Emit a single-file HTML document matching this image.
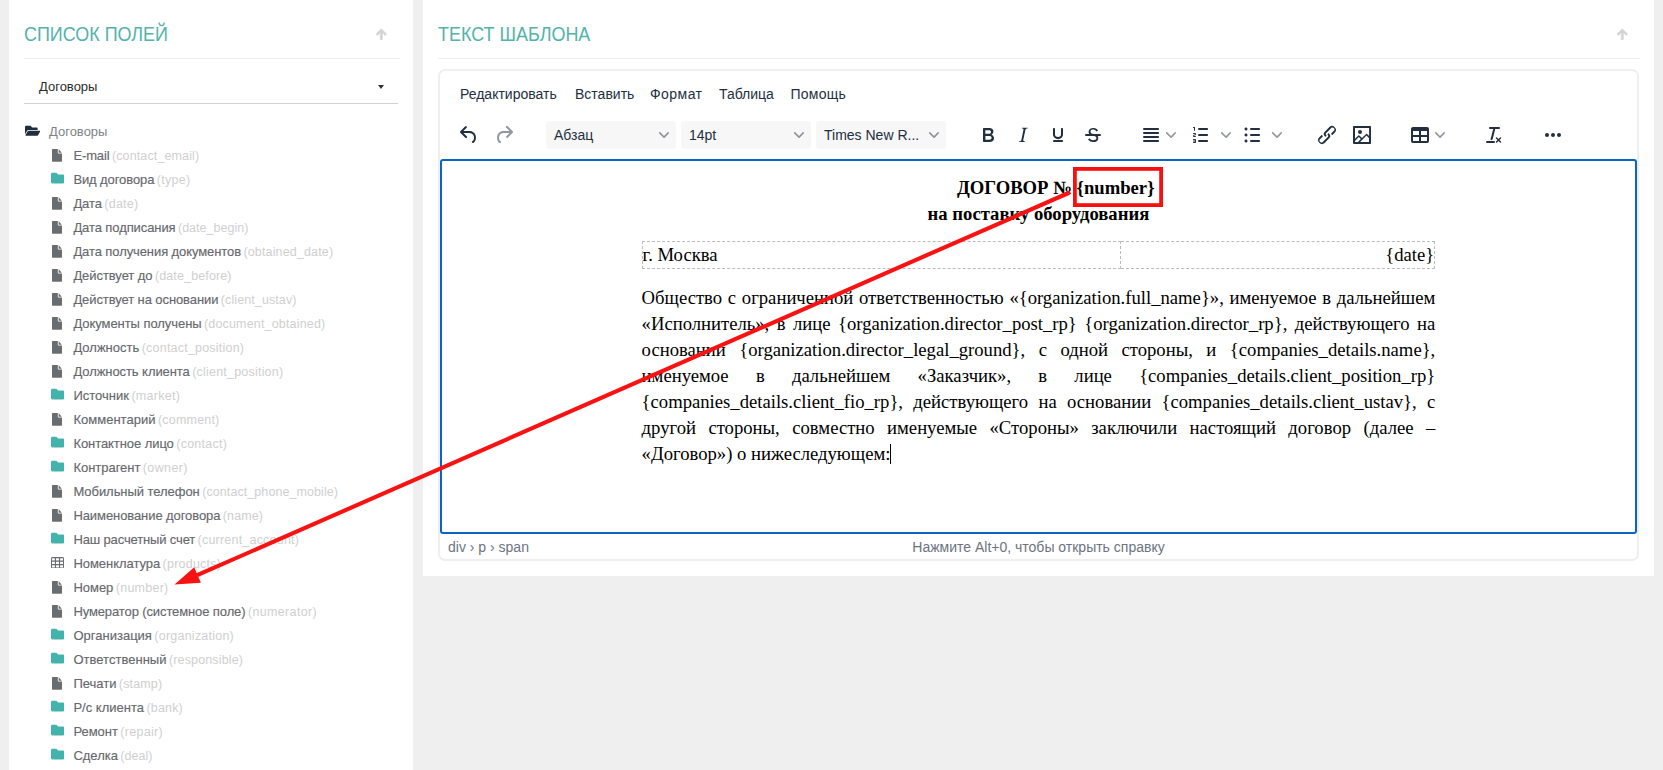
<!DOCTYPE html>
<html lang="ru">
<head>
<meta charset="utf-8">
<title>Шаблон документа</title>
<style>
*{box-sizing:border-box;margin:0;padding:0}
html,body{width:1663px;height:770px;overflow:hidden}
body{background:#efefef;font-family:"Liberation Sans",sans-serif;position:relative;color:#676a6c}
.panel{position:absolute;background:#fff}
#left{left:10px;top:0;width:403px;height:770px;box-shadow:-1px 0 0 #fff}
#right{left:423px;top:0;width:1231px;height:576px}
.ptitle{position:absolute;top:21.7px;transform-origin:0 50%;transform:scaleX(0.897);font-size:20px;line-height:24px;color:#52b3aa;white-space:nowrap;font-weight:400}
.phr{position:absolute;top:58px;height:1px;background:#eeeeee}
.up{position:absolute;top:28px;width:12.6px;height:12.6px}
/* select */
#sel{position:absolute;left:14px;top:69px;width:374px;height:35px;border-bottom:1px solid #d0d0d0}
#sel span{position:absolute;left:15px;top:10px;font-size:13px;line-height:16px;color:#2b2b2b}
#sel i{position:absolute;right:14px;top:16px;width:0;height:0;border-left:3.5px solid transparent;border-right:3.5px solid transparent;border-top:4px solid #333}
/* tree */
#tree{position:absolute;left:0;top:120px;width:403px;list-style:none}
#tree li{position:relative;height:24px;line-height:24px;font-size:13px;white-space:nowrap;color:#5a5d60}
#tree li b{font-weight:400;color:#65686c;-webkit-text-stroke:0.14px #65686c;letter-spacing:-0.12px}
#tree li em{font-style:normal;color:#cfcfcf;font-size:12.5px;margin-left:-1.2px}
#tree li svg{position:absolute;top:5px}
#tree li svg.fi{left:41.8px;top:5px}
#tree li svg.fo{left:40.5px;top:3.1px}
#tree li svg.ta{left:40.5px;top:5px}
#tree li.root{padding-left:39px;color:#808386}
#tree li.root svg{left:15.3px;top:4px}
#tree li.it{padding-left:63.4px}
/* editor */
#tox{position:absolute;left:15px;top:69px;width:1201px;height:492px;border:2px solid #efefef;border-radius:7px;background:#fff}
#menubar{position:absolute;left:0;top:0;height:40px;width:100%}
#menubar span{position:absolute;top:13px;font-size:14px;line-height:20px;color:#222f3e;white-space:nowrap}
#toolbar{position:absolute;left:0;top:46px;height:40px;width:100%}
.tsel{position:absolute;top:4px;height:28px;width:130px;background:#f7f7f7;border-radius:3px}
.tsel span{position:absolute;left:8px;top:4px;font-size:14px;line-height:20px;color:#222f3e;white-space:nowrap}
.tsel svg{position:absolute;right:7px;top:9px}
.tb{position:absolute}
#edit{position:absolute;left:0px;top:88px;width:1197px;height:375px;border:2px solid #0b64c4;border-radius:3px;background:#fff}
#status{position:absolute;left:0;top:463px;width:100%;height:25px;font-size:14px;line-height:26px;color:#6b7480}
#status .pth{position:absolute;left:8px;top:0}
#status .hlp{position:absolute;left:0;right:0;top:0;text-align:center}
/* document */
#doc{position:absolute;left:199.6px;top:0;width:793.7px;font-family:"Liberation Serif",serif;color:#000;font-size:18.667px;line-height:26px}
#doc p{margin:0}
#doc .c{text-align:center;font-weight:700}
#doc table{border-collapse:collapse;width:100%;table-layout:fixed}
#doc td{border:1px dashed #bbb;padding:0;height:27px;line-height:26px}
#doc .j{text-align:justify}
#anno{position:absolute;left:0;top:0;width:1663px;height:770px;pointer-events:none}
</style>
</head>
<body>

<div class="panel" id="left">
  <div class="ptitle" style="left:14px">СПИСОК ПОЛЕЙ</div>
  <svg class="up" style="left:364.8px" viewBox="0 0 14 14"><path d="M7 0.8 L12.9 6.7 L11.3 8.3 L8.2 5.2 V13 H5.8 V5.2 L2.7 8.3 L1.1 6.700 Z" fill="#d4d4d4" stroke="#d4d4d4" stroke-width="0.6" stroke-linejoin="round"/></svg>
  <div class="phr" style="left:14px;width:376px"></div>
  <div id="sel"><span>Договоры</span><i></i></div>
  <ul id="tree">
    <li class="root"><svg width="15.2" height="13.5" viewBox="0 0 576 512"><path fill="#1f2d3d" d="M572.694 292.093L500.27 416.248A63.997 63.997 0 0 1 444.989 448H45.025c-18.523 0-30.064-20.093-20.731-36.093l72.424-124.155A64 64 0 0 1 152 256h399.964c18.523 0 30.064 20.093 20.73 36.093zM152 224h328v-48c0-26.51-21.49-48-48-48H272l-64-64H48C21.49 64 0 85.49 0 112v278.046l69.077-118.418C86.214 242.25 117.989 224 152 224z"/></svg>Договоры</li>
    <li class="it"><svg class="fi" width="10" height="12.8" viewBox="128 0 1536 1792" preserveAspectRatio="none"><path fill="#6a6d70" d="M1152 512v-472q22 14 36 28l408 408q14 14 28 36h-472zm-128 32q0 40 28 68t68 28h544v1056q0 40-28 68t-68 28h-1344q-40 0-68-28t-28-68v-1600q0-40 28-68t68-28h800v544z"/></svg><b style="letter-spacing:-0.12px">E-mail</b> <em style="letter-spacing:0.12px">(contact_email)</em></li>
    <li class="it"><svg class="fo" width="13.3" height="14.2" viewBox="0 0 512 512" preserveAspectRatio="none"><path fill="#42b4ac" d="M464 128H272l-64-64H48C21.490 64 0 85.490 0 112v288c0 26.510 21.490 48 48 48h416c26.510 0 48-21.490 48-48V176c0-26.510-21.490-48-48-48z"/></svg><b style="letter-spacing:-0.10px">Вид договора</b> <em style="letter-spacing:0.32px">(type)</em></li>
    <li class="it"><svg class="fi" width="10" height="12.8" viewBox="128 0 1536 1792" preserveAspectRatio="none"><path fill="#6a6d70" d="M1152 512v-472q22 14 36 28l408 408q14 14 28 36h-472zm-128 32q0 40 28 68t68 28h544v1056q0 40-28 68t-68 28h-1344q-40 0-68-28t-28-68v-1600q0-40 28-68t68-28h800v544z"/></svg><b style="letter-spacing:-0.07px">Дата</b> <em style="letter-spacing:0.21px">(date)</em></li>
    <li class="it"><svg class="fi" width="10" height="12.8" viewBox="128 0 1536 1792" preserveAspectRatio="none"><path fill="#6a6d70" d="M1152 512v-472q22 14 36 28l408 408q14 14 28 36h-472zm-128 32q0 40 28 68t68 28h544v1056q0 40-28 68t-68 28h-1344q-40 0-68-28t-28-68v-1600q0-40 28-68t68-28h800v544z"/></svg><b style="letter-spacing:-0.09px">Дата подписания</b> <em style="letter-spacing:0.02px">(date_begin)</em></li>
    <li class="it"><svg class="fi" width="10" height="12.8" viewBox="128 0 1536 1792" preserveAspectRatio="none"><path fill="#6a6d70" d="M1152 512v-472q22 14 36 28l408 408q14 14 28 36h-472zm-128 32q0 40 28 68t68 28h544v1056q0 40-28 68t-68 28h-1344q-40 0-68-28t-28-68v-1600q0-40 28-68t68-28h800v544z"/></svg><b style="letter-spacing:-0.09px">Дата получения документов</b> <em style="letter-spacing:0.15px">(obtained_date)</em></li>
    <li class="it"><svg class="fi" width="10" height="12.8" viewBox="128 0 1536 1792" preserveAspectRatio="none"><path fill="#6a6d70" d="M1152 512v-472q22 14 36 28l408 408q14 14 28 36h-472zm-128 32q0 40 28 68t68 28h544v1056q0 40-28 68t-68 28h-1344q-40 0-68-28t-28-68v-1600q0-40 28-68t68-28h800v544z"/></svg><b style="letter-spacing:-0.07px">Действует до</b> <em style="letter-spacing:0.13px">(date_before)</em></li>
    <li class="it"><svg class="fi" width="10" height="12.8" viewBox="128 0 1536 1792" preserveAspectRatio="none"><path fill="#6a6d70" d="M1152 512v-472q22 14 36 28l408 408q14 14 28 36h-472zm-128 32q0 40 28 68t68 28h544v1056q0 40-28 68t-68 28h-1344q-40 0-68-28t-28-68v-1600q0-40 28-68t68-28h800v544z"/></svg><b style="letter-spacing:-0.09px">Действует на основании</b> <em style="letter-spacing:0.10px">(client_ustav)</em></li>
    <li class="it"><svg class="fi" width="10" height="12.8" viewBox="128 0 1536 1792" preserveAspectRatio="none"><path fill="#6a6d70" d="M1152 512v-472q22 14 36 28l408 408q14 14 28 36h-472zm-128 32q0 40 28 68t68 28h544v1056q0 40-28 68t-68 28h-1344q-40 0-68-28t-28-68v-1600q0-40 28-68t68-28h800v544z"/></svg><b style="letter-spacing:-0.06px">Документы получены</b> <em style="letter-spacing:0.17px">(document_obtained)</em></li>
    <li class="it"><svg class="fi" width="10" height="12.8" viewBox="128 0 1536 1792" preserveAspectRatio="none"><path fill="#6a6d70" d="M1152 512v-472q22 14 36 28l408 408q14 14 28 36h-472zm-128 32q0 40 28 68t68 28h544v1056q0 40-28 68t-68 28h-1344q-40 0-68-28t-28-68v-1600q0-40 28-68t68-28h800v544z"/></svg><b style="letter-spacing:0.01px">Должность</b> <em style="letter-spacing:0.21px">(contact_position)</em></li>
    <li class="it"><svg class="fi" width="10" height="12.8" viewBox="128 0 1536 1792" preserveAspectRatio="none"><path fill="#6a6d70" d="M1152 512v-472q22 14 36 28l408 408q14 14 28 36h-472zm-128 32q0 40 28 68t68 28h544v1056q0 40-28 68t-68 28h-1344q-40 0-68-28t-28-68v-1600q0-40 28-68t68-28h800v544z"/></svg><b style="letter-spacing:-0.07px">Должность клиента</b> <em style="letter-spacing:0.21px">(client_position)</em></li>
    <li class="it"><svg class="fo" width="13.3" height="14.2" viewBox="0 0 512 512" preserveAspectRatio="none"><path fill="#42b4ac" d="M464 128H272l-64-64H48C21.490 64 0 85.490 0 112v288c0 26.510 21.490 48 48 48h416c26.510 0 48-21.490 48-48V176c0-26.510-21.490-48-48-48z"/></svg><b style="letter-spacing:0.01px">Источник</b> <em style="letter-spacing:0.27px">(market)</em></li>
    <li class="it"><svg class="fi" width="10" height="12.8" viewBox="128 0 1536 1792" preserveAspectRatio="none"><path fill="#6a6d70" d="M1152 512v-472q22 14 36 28l408 408q14 14 28 36h-472zm-128 32q0 40 28 68t68 28h544v1056q0 40-28 68t-68 28h-1344q-40 0-68-28t-28-68v-1600q0-40 28-68t68-28h800v544z"/></svg><b style="letter-spacing:0.02px">Комментарий</b> <em style="letter-spacing:0.20px">(comment)</em></li>
    <li class="it"><svg class="fo" width="13.3" height="14.2" viewBox="0 0 512 512" preserveAspectRatio="none"><path fill="#42b4ac" d="M464 128H272l-64-64H48C21.490 64 0 85.490 0 112v288c0 26.510 21.490 48 48 48h416c26.510 0 48-21.490 48-48V176c0-26.510-21.490-48-48-48z"/></svg><b style="letter-spacing:-0.07px">Контактное лицо</b> <em style="letter-spacing:0.26px">(contact)</em></li>
    <li class="it"><svg class="fo" width="13.3" height="14.2" viewBox="0 0 512 512" preserveAspectRatio="none"><path fill="#42b4ac" d="M464 128H272l-64-64H48C21.490 64 0 85.490 0 112v288c0 26.510 21.490 48 48 48h416c26.510 0 48-21.490 48-48V176c0-26.510-21.490-48-48-48z"/></svg><b style="letter-spacing:-0.02px">Контрагент</b> <em style="letter-spacing:0.36px">(owner)</em></li>
    <li class="it"><svg class="fi" width="10" height="12.8" viewBox="128 0 1536 1792" preserveAspectRatio="none"><path fill="#6a6d70" d="M1152 512v-472q22 14 36 28l408 408q14 14 28 36h-472zm-128 32q0 40 28 68t68 28h544v1056q0 40-28 68t-68 28h-1344q-40 0-68-28t-28-68v-1600q0-40 28-68t68-28h800v544z"/></svg><b style="letter-spacing:-0.05px">Мобильный телефон</b> <em style="letter-spacing:0.08px">(contact_phone_mobile)</em></li>
    <li class="it"><svg class="fi" width="10" height="12.8" viewBox="128 0 1536 1792" preserveAspectRatio="none"><path fill="#6a6d70" d="M1152 512v-472q22 14 36 28l408 408q14 14 28 36h-472zm-128 32q0 40 28 68t68 28h544v1056q0 40-28 68t-68 28h-1344q-40 0-68-28t-28-68v-1600q0-40 28-68t68-28h800v544z"/></svg><b style="letter-spacing:-0.08px">Наименование договора</b> <em style="letter-spacing:0.10px">(name)</em></li>
    <li class="it"><svg class="fo" width="13.3" height="14.2" viewBox="0 0 512 512" preserveAspectRatio="none"><path fill="#42b4ac" d="M464 128H272l-64-64H48C21.490 64 0 85.490 0 112v288c0 26.510 21.490 48 48 48h416c26.510 0 48-21.490 48-48V176c0-26.510-21.490-48-48-48z"/></svg><b style="letter-spacing:-0.14px">Наш расчетный счет</b> <em style="letter-spacing:0.21px">(current_account)</em></li>
    <li class="it"><svg class="ta" width="13" height="11.4" viewBox="0 0 26 22.8"><rect x="0" y="0" width="26" height="22.8" rx="3" fill="#6a6d70"/><rect x="2.00" y="2.60" width="5.80" height="4.53" rx="0.6" fill="#fff"/><rect x="10.10" y="2.60" width="5.80" height="4.53" rx="0.6" fill="#fff"/><rect x="18.20" y="2.60" width="5.80" height="4.53" rx="0.6" fill="#fff"/><rect x="2.00" y="9.43" width="5.80" height="4.53" rx="0.6" fill="#fff"/><rect x="10.10" y="9.43" width="5.80" height="4.53" rx="0.6" fill="#fff"/><rect x="18.20" y="9.43" width="5.80" height="4.53" rx="0.6" fill="#fff"/><rect x="2.00" y="16.27" width="5.80" height="4.53" rx="0.6" fill="#fff"/><rect x="10.10" y="16.27" width="5.80" height="4.53" rx="0.6" fill="#fff"/><rect x="18.20" y="16.27" width="5.80" height="4.53" rx="0.6" fill="#fff"/></svg><b style="letter-spacing:-0.04px">Номенклатура</b> <em style="letter-spacing:0.23px">(products)</em></li>
    <li class="it"><svg class="fi" width="10" height="12.8" viewBox="128 0 1536 1792" preserveAspectRatio="none"><path fill="#6a6d70" d="M1152 512v-472q22 14 36 28l408 408q14 14 28 36h-472zm-128 32q0 40 28 68t68 28h544v1056q0 40-28 68t-68 28h-1344q-40 0-68-28t-28-68v-1600q0-40 28-68t68-28h800v544z"/></svg><b style="letter-spacing:-0.02px">Номер</b> <em style="letter-spacing:0.26px">(number)</em></li>
    <li class="it"><svg class="fi" width="10" height="12.8" viewBox="128 0 1536 1792" preserveAspectRatio="none"><path fill="#6a6d70" d="M1152 512v-472q22 14 36 28l408 408q14 14 28 36h-472zm-128 32q0 40 28 68t68 28h544v1056q0 40-28 68t-68 28h-1344q-40 0-68-28t-28-68v-1600q0-40 28-68t68-28h800v544z"/></svg><b style="letter-spacing:-0.11px">Нумератор (системное поле)</b> <em style="letter-spacing:0.35px">(numerator)</em></li>
    <li class="it"><svg class="fo" width="13.3" height="14.2" viewBox="0 0 512 512" preserveAspectRatio="none"><path fill="#42b4ac" d="M464 128H272l-64-64H48C21.490 64 0 85.490 0 112v288c0 26.510 21.490 48 48 48h416c26.510 0 48-21.490 48-48V176c0-26.510-21.490-48-48-48z"/></svg><b style="letter-spacing:0.01px">Организация</b> <em style="letter-spacing:0.23px">(organization)</em></li>
    <li class="it"><svg class="fo" width="13.3" height="14.2" viewBox="0 0 512 512" preserveAspectRatio="none"><path fill="#42b4ac" d="M464 128H272l-64-64H48C21.490 64 0 85.490 0 112v288c0 26.510 21.490 48 48 48h416c26.510 0 48-21.490 48-48V176c0-26.510-21.490-48-48-48z"/></svg><b style="letter-spacing:0.02px">Ответственный</b> <em style="letter-spacing:0.15px">(responsible)</em></li>
    <li class="it"><svg class="fi" width="10" height="12.8" viewBox="128 0 1536 1792" preserveAspectRatio="none"><path fill="#6a6d70" d="M1152 512v-472q22 14 36 28l408 408q14 14 28 36h-472zm-128 32q0 40 28 68t68 28h544v1056q0 40-28 68t-68 28h-1344q-40 0-68-28t-28-68v-1600q0-40 28-68t68-28h800v544z"/></svg><b style="letter-spacing:-0.01px">Печати</b> <em style="letter-spacing:0.15px">(stamp)</em></li>
    <li class="it"><svg class="fo" width="13.3" height="14.2" viewBox="0 0 512 512" preserveAspectRatio="none"><path fill="#42b4ac" d="M464 128H272l-64-64H48C21.490 64 0 85.490 0 112v288c0 26.510 21.490 48 48 48h416c26.510 0 48-21.490 48-48V176c0-26.510-21.490-48-48-48z"/></svg><b style="letter-spacing:0.01px">Р/с клиента</b> <em style="letter-spacing:0.16px">(bank)</em></li>
    <li class="it"><svg class="fo" width="13.3" height="14.2" viewBox="0 0 512 512" preserveAspectRatio="none"><path fill="#42b4ac" d="M464 128H272l-64-64H48C21.490 64 0 85.490 0 112v288c0 26.510 21.490 48 48 48h416c26.510 0 48-21.490 48-48V176c0-26.510-21.490-48-48-48z"/></svg><b style="letter-spacing:-0.02px">Ремонт</b> <em style="letter-spacing:0.30px">(repair)</em></li>
    <li class="it"><svg class="fo" width="13.3" height="14.2" viewBox="0 0 512 512" preserveAspectRatio="none"><path fill="#42b4ac" d="M464 128H272l-64-64H48C21.490 64 0 85.490 0 112v288c0 26.510 21.490 48 48 48h416c26.510 0 48-21.490 48-48V176c0-26.510-21.490-48-48-48z"/></svg><b style="letter-spacing:-0.01px">Сделка</b> <em style="letter-spacing:0.04px">(deal)</em></li>
  </ul>
</div>

<div class="panel" id="right">
  <div class="ptitle" style="left:15px">ТЕКСТ ШАБЛОНА</div>
  <svg class="up" style="left:1192.8px" viewBox="0 0 14 14"><path d="M7 0.8 L12.9 6.7 L11.3 8.3 L8.2 5.2 V13 H5.8 V5.2 L2.7 8.3 L1.1 6.700 Z" fill="#d4d4d4" stroke="#d4d4d4" stroke-width="0.6" stroke-linejoin="round"/></svg>
  <div class="phr" style="left:15px;width:1202px"></div>
  <div id="tox">
    <div id="menubar">
      <span style="left:20px">Редактировать</span>
      <span style="left:135px">Вставить</span>
      <span style="left:210px;letter-spacing:0.45px">Формат</span>
      <span style="left:279px">Таблица</span>
      <span style="left:350.5px;letter-spacing:0.25px">Помощь</span>
    </div>
    <div id="toolbar">
      <svg class="tb" style="left:17px;top:6px" width="24" height="24" viewBox="0 0 24 24" fill="#222f3e"><path d="M6.4 8H12c3.700 0 6.200 2 6.800 5.100.6 2.700-.4 5.600-2.300 6.800a1 1 0 0 1-1-1.800c1.100-.6 1.800-2.700 1.400-4.600-.5-2.100-2.100-3.500-4.900-3.500H6.400l3.300 3.300a1 1 0 1 1-1.400 1.400l-5-5a1 1 0 0 1 0-1.400l5-5a1 1 0 0 1 1.400 1.400L6.400 8Z"/></svg>
      <svg class="tb" style="left:52px;top:6px" width="24" height="24" viewBox="0 0 24 24" fill="#222f3e80"><path d="M17.600 10H12c-2.800 0-4.400 1.400-4.900 3.500-.4 2 .3 4 1.400 4.600a1 1 0 1 1-1 1.800c-2-1.200-2.900-4.100-2.300-6.800.6-3 3-5.100 6.800-5.100h5.600l-3.300-3.300a1 1 0 1 1 1.400-1.400l5 5a1 1 0 0 1 0 1.400l-5 5a1 1 0 0 1-1.400-1.400l3.300-3.300Z"/></svg>
      <div class="tsel" style="left:106px"><span>Абзац</span><svg width="10" height="10" viewBox="0 0 10 10" fill="#222f3e" fill-opacity=".5"><path d="M8.700 2.200c.3-.3.800-.3 1 0 .4.400.4.900 0 1.200L5.700 7.800c-.3.300-.9.300-1.200 0L.2 3.400a.8.800 0 0 1 0-1.200c.3-.3.800-.3 1.100 0L5 6l3.700-3.800Z"/></svg></div>
      <div class="tsel" style="left:241px"><span>14pt</span><svg width="10" height="10" viewBox="0 0 10 10" fill="#222f3e" fill-opacity=".5"><path d="M8.700 2.200c.3-.3.800-.3 1 0 .4.400.4.900 0 1.200L5.700 7.800c-.3.300-.9.300-1.200 0L.2 3.400a.8.800 0 0 1 0-1.200c.3-.3.800-.3 1.100 0L5 6l3.700-3.800Z"/></svg></div>
      <div class="tsel" style="left:376px"><span>Times New R...</span><svg width="10" height="10" viewBox="0 0 10 10" fill="#222f3e" fill-opacity=".5"><path d="M8.700 2.200c.3-.3.800-.3 1 0 .4.400.4.900 0 1.200L5.700 7.800c-.3.300-.9.300-1.200 0L.2 3.400a.8.800 0 0 1 0-1.200c.3-.3.800-.3 1.100 0L5 6l3.700-3.800Z"/></svg></div>
      <svg class="tb" style="left:536px;top:6px" width="24" height="24" viewBox="0 0 24 24" fill="#222f3e"><path fill-rule="evenodd" d="M7.800 19c-.3 0-.5 0-.6-.2l-.2-.5V5.700c0-.2 0-.4.200-.5l.6-.2h5c1.500 0 2.700.3 3.500 1 .7.600 1.100 1.400 1.100 2.500a3 3 0 0 1-.6 1.900c-.4.600-1 1-1.600 1.200.4.100.9.300 1.300.6s.8.700 1 1.200c.4.400.500 1 .5 1.600 0 1.300-.4 2.300-1.300 3-.8.700-2.100 1-3.800 1H7.800Zm5-8.300c.6 0 1.200-.1 1.600-.5.400-.3.600-.7.600-1.300 0-1.100-.8-1.700-2.300-1.700H9.300v3.500h3.400Zm.5 6c.7 0 1.300-.1 1.700-.4.400-.4.600-.9.600-1.500s-.2-1-.700-1.400c-.4-.3-1-.4-2-.4H9.400v3.800h4Z"/></svg>
      <svg class="tb" style="left:571px;top:6px" width="24" height="24" viewBox="0 0 24 24" fill="#222f3e"><path fill-rule="evenodd" d="m16.700 4.700-.1.900h-.3c-.6 0-1 0-1.400.3-.3.300-.4.600-.5 1.100l-2.100 9.800v.600c0 .5.400.800 1.400.8h.200l-.200.800H8l.2-.8h.2c1.100 0 1.800-.5 2-1.500l2-9.800.1-.5c0-.6-.4-.8-1.400-.8h-.300l.200-.900h5.800Z"/></svg>
      <svg class="tb" style="left:606px;top:6px" width="24" height="24" viewBox="0 0 24 24" fill="#222f3e"><path fill-rule="evenodd" d="M16 5c.6 0 1 .4 1 1v5.500a4 4 0 0 1-.4 1.800l-1 1.400a5.300 5.300 0 0 1-5.500 1 5 5 0 0 1-1.600-1c-.5-.4-.8-.9-1.100-1.400a4 4 0 0 1-.4-1.800V6c0-.6.400-1 1-1s1 .4 1 1v5.500c0 .3 0 .6.200 1l.6.700a3.300 3.300 0 0 0 2.200.8 3.400 3.400 0 0 0 2.200-.8c.3-.2.400-.5.600-.8l.2-.9V6c0-.6.400-1 1-1ZM8 17h8c.6 0 1 .4 1 1s-.4 1-1 1H8a1 1 0 0 1 0-2Z"/></svg>
      <svg class="tb" style="left:641px;top:6px" width="24" height="24" viewBox="0 0 24 24" fill="#222f3e"><g fill-rule="evenodd"><path d="M15.600 8.500c-.5-.7-1-1.100-1.300-1.300-.6-.4-1.300-.6-2-.6-2.700 0-2.800 1.700-2.800 2.100 0 1.600 1.800 2 3.200 2.300 4.400.9 4.600 2.800 4.600 3.900 0 1.400-.7 4.100-5 4.100A6.200 6.200 0 0 1 7 16.400l1.500-1.100c.4.600 1.600 2 3.700 2 1.600 0 2.500-.4 3-1.200.4-.8.300-2-.8-2.600-.7-.4-1.600-.7-2.900-1-1-.2-3.900-.8-3.900-3.600C7.600 6 10.300 5 12.400 5c2.900 0 4.200 1.600 4.700 2.400l-1.500 1.100Z"/><path d="M5 11h14a1 1 0 0 1 0 2H5a1 1 0 0 1 0-2Z"/></g></svg>
      <svg class="tb" style="left:699px;top:6px" width="24" height="24" viewBox="0 0 24 24" fill="#222f3e"><path fill-rule="evenodd" d="M5 5h14c.6 0 1 .4 1 1s-.4 1-1 1H5a1 1 0 1 1 0-2Zm0 4h14c.6 0 1 .4 1 1s-.4 1-1 1H5a1 1 0 1 1 0-2Zm0 4h14c.6 0 1 .4 1 1s-.4 1-1 1H5a1 1 0 0 1 0-2Zm0 4h14c.6 0 1 .4 1 1s-.4 1-1 1H5a1 1 0 0 1 0-2Z"/></svg>
      <svg class="tb" style="left:726px;top:13px" width="10" height="10" viewBox="0 0 10 10" fill="#222f3e" fill-opacity=".5"><path d="M8.700 2.200c.3-.3.800-.3 1 0 .4.400.4.900 0 1.200L5.700 7.800c-.3.300-.9.300-1.200 0L.2 3.400a.8.800 0 0 1 0-1.200c.3-.3.800-.3 1.100 0L5 6l3.700-3.800Z"/></svg>
      <svg class="tb" style="left:749px;top:6px" width="24" height="24" viewBox="0 0 24 24" fill="#222f3e"><path fill-rule="evenodd" d="M10 17h8c.6 0 1 .4 1 1s-.4 1-1 1h-8a1 1 0 0 1 0-2Zm0-6h8c.6 0 1 .4 1 1s-.4 1-1 1h-8a1 1 0 0 1 0-2Zm0-6h8c.6 0 1 .4 1 1s-.4 1-1 1h-8a1 1 0 1 1 0-2ZM6 4v3.500c0 .3-.2.500-.5.500a.5.500 0 0 1-.5-.5V5h-.5a.5.500 0 0 1 0-1H6Zm-1 8.800.2.200h1.300c.3 0 .5.200.5.500s-.2.500-.5.500H4.900a1 1 0 0 1-.9-1V13c0-.4.300-.8.600-1l1.200-.4.200-.3a.2.200 0 0 0-.2-.2H4.500a.5.500 0 0 1-.5-.5c0-.3.200-.5.500-.5h1.600c.5 0 .9.400.9 1v.1c0 .4-.3.800-.6 1l-1.200.4-.2.300ZM7 17v2c0 .6-.4 1-1 1H4.500a.5.500 0 0 1 0-1h1.200c.2 0 .3-.1.300-.3 0-.2-.1-.3-.3-.3H4.400a.4.400 0 1 1 0-.8h1.300c.2 0 .3-.1.300-.3 0-.2-.1-.3-.3-.3H4.500a.5.500 0 1 1 0-1H6c.6 0 1 .4 1 1Z"/></svg>
      <svg class="tb" style="left:781px;top:13px" width="10" height="10" viewBox="0 0 10 10" fill="#222f3e" fill-opacity=".5"><path d="M8.700 2.200c.3-.3.800-.3 1 0 .4.400.4.900 0 1.200L5.700 7.800c-.3.300-.9.300-1.200 0L.2 3.400a.8.800 0 0 1 0-1.200c.3-.3.800-.3 1.100 0L5 6l3.700-3.800Z"/></svg>
      <svg class="tb" style="left:800px;top:6px" width="24" height="24" viewBox="0 0 24 24" fill="#222f3e"><path fill-rule="evenodd" d="M11 5h8c.6 0 1 .4 1 1s-.4 1-1 1h-8a1 1 0 0 1 0-2Zm0 6h8c.6 0 1 .4 1 1s-.4 1-1 1h-8a1 1 0 0 1 0-2Zm0 6h8c.6 0 1 .4 1 1s-.4 1-1 1h-8a1 1 0 0 1 0-2ZM4.500 6c0-.4.100-.8.400-1 .3-.4.700-.5 1.100-.5.400 0 .8.100 1 .4.400.3.500.7.500 1.100 0 .4-.1.800-.4 1-.3.400-.7.500-1.100.5-.4 0-.8-.1-1-.4-.4-.3-.5-.7-.5-1.100Zm0 6c0-.4.100-.8.400-1 .3-.4.700-.5 1.100-.5.400 0 .8.100 1 .4.400.3.500.7.500 1.100 0 .4-.1.800-.4 1-.3.400-.7.500-1.100.5-.4 0-.8-.1-1-.4-.4-.3-.5-.7-.5-1.100Zm0 6c0-.4.100-.8.400-1 .3-.4.700-.5 1.100-.5.400 0 .8.100 1 .4.400.3.500.7.500 1.100 0 .4-.1.800-.4 1-.3.400-.7.500-1.100.5-.4 0-.8-.1-1-.4-.4-.3-.5-.7-.5-1.100Z"/></svg>
      <svg class="tb" style="left:832px;top:13px" width="10" height="10" viewBox="0 0 10 10" fill="#222f3e" fill-opacity=".5"><path d="M8.700 2.200c.3-.3.800-.3 1 0 .4.400.4.900 0 1.200L5.700 7.800c-.3.300-.9.300-1.200 0L.2 3.400a.8.800 0 0 1 0-1.200c.3-.3.800-.3 1.100 0L5 6l3.700-3.800Z"/></svg>
      <svg class="tb" style="left:875px;top:6px" width="24" height="24" viewBox="0 0 24 24" fill="#222f3e"><path d="M6.200 12.300a1 1 0 0 1 1.400 1.400l-2 2a2 2 0 1 0 2.600 2.800l4.800-4.800a1 1 0 0 0 0-1.400 1 1 0 1 1 1.400-1.300 2.900 2.900 0 0 1 0 4L9.600 20a3.900 3.900 0 0 1-5.500-5.500l2-2Zm11.600-.6a1 1 0 0 1-1.400-1.400l2-2a2 2 0 1 0-2.600-2.800L11 10.300a1 1 0 0 0 0 1.400A1 1 0 1 1 9.600 13a2.900 2.900 0 0 1 0-4L14.400 4a3.900 3.900 0 0 1 5.500 5.500l-2 2Z"/></svg>
      <svg class="tb" style="left:910px;top:6px" width="24" height="24" viewBox="0 0 24 24" fill="#222f3e"><path d="m5 15.700 3.300-3.200c.3-.3.700-.3 1 0L12 15l4.100-4c.3-.4.800-.4 1 0l2 1.900V5H5v10.700ZM5 18V19h3l2.800-2.900-2-2L5 17.900Zm14-3-2.500-2.400-6.400 6.500H19v-4ZM4 3h16c.6 0 1 .4 1 1v16c0 .6-.4 1-1 1H4a1 1 0 0 1-1-1V4c0-.6.400-1 1-1Zm6 8a2 2 0 1 0 0-4 2 2 0 0 0 0 4Z"/></svg>
      <svg class="tb" style="left:968px;top:6px" width="24" height="24" viewBox="0 0 24 24" fill="#222f3e"><path d="M19 4a2 2 0 0 1 2 2v12a2 2 0 0 1-2 2H5a2 2 0 0 1-2-2V6c0-1.100.9-2 2-2h14ZM5 14v4h6v-4H5Zm14 0h-6v4h6v-4Zm0-6h-6v4h6V8ZM5 12h6V8H5v4Z"/></svg>
      <svg class="tb" style="left:995px;top:13px" width="10" height="10" viewBox="0 0 10 10" fill="#222f3e" fill-opacity=".5"><path d="M8.700 2.200c.3-.3.800-.3 1 0 .4.400.4.900 0 1.200L5.700 7.800c-.3.300-.9.300-1.200 0L.2 3.400a.8.800 0 0 1 0-1.200c.3-.3.800-.3 1.100 0L5 6l3.700-3.800Z"/></svg>
      <svg class="tb" style="left:1042px;top:6px" width="24" height="24" viewBox="0 0 24 24" fill="#222f3e"><path fill-rule="evenodd" d="M13.200 6a1 1 0 0 1 0 .2l-2.600 10a1 1 0 0 1-1 .8h-.2a.8.800 0 0 1-.8-1l2.600-10H8a1 1 0 1 1 0-2h9a1 1 0 0 1 0 2h-3.800ZM5 18h7a1 1 0 0 1 0 2H5a1 1 0 0 1 0-2Zm13 1.500L16.500 18 15 19.500a.7.700 0 0 1-1-1l1.500-1.500-1.500-1.500a.7.700 0 0 1 1-1l1.500 1.500 1.500-1.500a.7.700 0 0 1 1 1L17.500 17l1.500 1.500a.7.700 0 0 1-1 1Z"/></svg>
      <svg class="tb" style="left:1101px;top:6px" width="24" height="24" viewBox="0 0 24 24" fill="#222f3e"><path d="M6 10a2 2 0 0 0-2 2c0 1.100.9 2 2 2a2 2 0 0 0 2-2 2 2 0 0 0-2-2Zm12 0a2 2 0 0 0-2 2c0 1.100.9 2 2 2a2 2 0 0 0 2-2 2 2 0 0 0-2-2Zm-6 0a2 2 0 0 0-2 2c0 1.100.9 2 2 2a2 2 0 0 0 2-2 2 2 0 0 0-2-2Z"/></svg>
    </div>
    <div id="edit">
      <div id="doc">
        <p class="c" style="padding-top:14px"><span style="padding-left:34.5px">ДОГОВОР № {number}</span></p>
        <p class="c">на поставку оборудования</p>
        <table style="margin-top:14px"><tr><td style="width:478px">г. Москва</td><td style="text-align:right">{date}</td></tr></table>
        <p class="j" style="margin-top:16px">Общество с ограниченной ответственностью «{organization.full_name}», именуемое в дальнейшем «Исполнитель», в лице {organization.director_post_rp} {organization.director_rp}, действующего на основании {organization.director_legal_ground}, с одной стороны, и {companies_details.name}, именуемое в дальнейшем «Заказчик», в лице {companies_details.client_position_rp} {companies_details.client_fio_rp}, действующего на основании {companies_details.client_ustav}, с другой стороны, совместно именуемые «Стороны» заключили настоящий договор (далее – «Договор») о нижеследующем:<span style="display:inline-block;width:1px;height:20px;background:#000;vertical-align:-4px;margin-left:0px"></span></p>
      </div>
    </div>
    <div id="status"><span class="pth">div › p › span</span><span class="hlp">Нажмите Alt+0, чтобы открыть справку</span></div>
  </div>
</div>

<svg id="anno" viewBox="0 0 1663 770">
  <rect x="1074.9" y="168.9" width="86.2" height="36.200" fill="none" stroke="#f61010" stroke-width="3.8"/>
  <line x1="1068.5" y1="193.0" x2="196" y2="575.7" stroke="#f91212" stroke-width="4.1" stroke-linecap="round"/>
  <polygon points="174.5,584.5 194.2,567.3 200.9,582.8" fill="#f91212"/>
</svg>
</body>
</html>
